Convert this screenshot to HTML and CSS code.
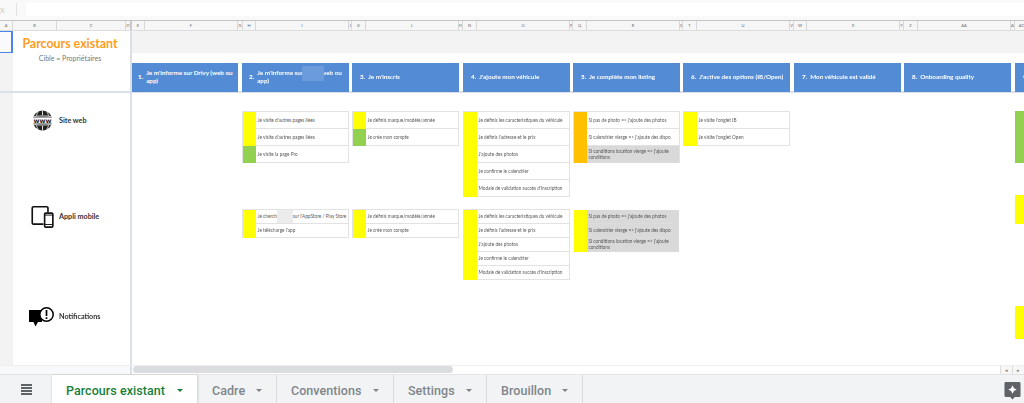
FILE: index.html
```html
<!DOCTYPE html>
<html lang="fr">
<head>
<meta charset="utf-8">
<title>Parcours existant</title>
<link rel="stylesheet" href="styles.css">
</head>
<body>
<div class="app">
  <div class="formula">
    <span class="fx">x</span>
    <div class="formula-input"></div>
  </div>
  <div class="colheads">
    <span class="ch w12">A</span><span class="ch w44">B</span><span class="ch w69">C</span><span class="ch w6 sep">D</span>
    <span class="ch w13">E</span><span class="ch w93">F</span><span class="ch w5">G</span>
    <span class="ch w13">H</span><span class="ch w93">I</span><span class="ch w3">J</span>
    <span class="ch w14">K</span><span class="ch w93">L</span><span class="ch w4">M</span>
    <span class="ch w14">N</span><span class="ch w93">O</span><span class="ch w3">P</span>
    <span class="ch w14">Q</span><span class="ch w93">R</span><span class="ch w3">S</span>
    <span class="ch w14">T</span><span class="ch w93">U</span><span class="ch w4">V</span>
    <span class="ch w13">W</span><span class="ch w93">X</span><span class="ch w4">Y</span>
    <span class="ch w14">Z</span><span class="ch w93">AA</span><span class="ch w4">AB</span>
    <span class="ch w14">AC</span>
  </div>

  <div class="sheet">
    <div class="top">
      <div class="rownum"><div class="selected"></div></div>
      <div class="frozen title-block">
        <h1 class="title">Parcours existant</h1>
        <p class="subtitle">Cible = Propriétaires</p>
      </div>
      <div class="main-top">
        <div class="band"></div>
        <div class="stages heads">
          <div class="head first"><b>1.</b><span>Je m'informe sur Drivy (web ou app)</span></div>
          <div class="head second"><b>2.</b><span>Je m'informe sur Drivy web ou app)</span><i class="smudge-blue"></i></div>
          <div class="head"><b>3.</b><span>Je m'inscris</span></div>
          <div class="head"><b>4.</b><span>J'ajoute mon véhicule</span></div>
          <div class="head"><b>5.</b><span>Je complète mon listing</span></div>
          <div class="head"><b>6.</b><span>J'active des options (IB/Open)</span></div>
          <div class="head"><b>7.</b><span>Mon véhicule est validé</span></div>
          <div class="head"><b>8.</b><span>Onboarding quality</span></div>
          <div class="head"><b>9.</b><span></span></div>
        </div>
      </div>
    </div>

    <div class="bottom">
      <div class="rownum"></div>
      <div class="frozen channels">
        <div class="channel web-ch">
          <svg class="ico" viewBox="0 0 24 24" width="23" height="23" aria-hidden="true">
            <circle cx="12" cy="12" r="10.4" fill="#222"/>
            <path d="M1.6 8.2C6 7 18 7 22.4 8.2M1.6 15.8C6 17 18 17 22.4 15.8M12 1.6V6.6M12 17.4V22.4M8 2.6C6.6 4 6 5.5 5.8 7M16 2.6C17.4 4 18 5.5 18.2 7M5.8 17C6 18.5 6.6 20 8 21.4M18.2 17C18 18.5 17.4 20 16 21.4" fill="none" stroke="#fff" stroke-width=".9"/>
            <rect x="0" y="8.8" width="24" height="6.4" fill="#fff"/>
            <text x="12" y="14.3" text-anchor="middle" class="www">www</text>
          </svg>
          <span>Site web</span>
        </div>
        <div class="channel app-ch">
          <svg class="ico" viewBox="0 0 24 24" width="23" height="24" aria-hidden="true">
            <path d="M13 19.5H2.6A1.3 1.3 0 0 1 1.3 18.2V2.6A1.3 1.3 0 0 1 2.6 1.3H16.4A1.3 1.3 0 0 1 17.7 2.6V7" fill="none" stroke="#111" stroke-width="1.7"/>
            <rect x="14.2" y="8" width="8.6" height="14.6" rx="1.2" fill="#fff" stroke="#111" stroke-width="1.7"/>
            <path d="M14.2 19.8H22.8M14.2 10H22.8" stroke="#111" stroke-width="1"/>
          </svg>
          <span>Appli mobile</span>
        </div>
        <div class="channel notif-ch">
          <svg class="ico wide" viewBox="0 0 26 22" width="26" height="22" aria-hidden="true">
            <path d="M1 4H14V16H10L7.5 20.5L5.5 16H1Z" fill="#000"/>
            <circle cx="18.5" cy="8.5" r="6.7" fill="#fff" stroke="#000" stroke-width="1.5"/>
            <path d="M18.5 4V10M18.5 11.3V13" stroke="#000" stroke-width="1.7"/>
          </svg>
          <span>Notifications</span>
        </div>
      </div>
      <div class="main-body">
        <div class="stages section web">
          <div></div>
          <div class="group">
            <div class="row"><i class="sw y"></i><p>Je visite d'autres pages liées</p></div>
            <div class="row"><i class="sw y"></i><p>Je visite d'autres pages liées</p></div>
            <div class="row"><i class="sw g"></i><p>Je visite la page Pro</p></div>
          </div>
          <div class="group">
            <div class="row"><i class="sw y"></i><p>Je définis marque/modèle/année</p></div>
            <div class="row"><i class="sw g"></i><p>Je crée mon compte</p></div>
          </div>
          <div class="group">
            <div class="row"><i class="sw y"></i><p>Je définis les caracteristiques du véhicule</p></div>
            <div class="row"><i class="sw y"></i><p>Je définis l'adresse et le prix</p></div>
            <div class="row"><i class="sw y"></i><p>J'ajoute des photos</p></div>
            <div class="row"><i class="sw y"></i><p>Je confirme le calendrier</p></div>
            <div class="row"><i class="sw y"></i><p>Modale de validation succès d'inscription</p></div>
          </div>
          <div class="group">
            <div class="row"><i class="sw o"></i><p>Si pas de photo =&gt; j'ajoute des photos</p></div>
            <div class="row"><i class="sw o"></i><p>Si calendrier vierge =&gt; j'ajoute des dispo</p></div>
            <div class="row off"><i class="sw o"></i><p>Si conditions location vierge =&gt; j'ajoute conditions</p></div>
          </div>
          <div class="group">
            <div class="row"><i class="sw y"></i><p>Je visite l'onglet IB</p></div>
            <div class="row"><i class="sw y"></i><p>Je visite l'onglet Open</p></div>
          </div>
          <div></div>
          <div></div>
          <div class="edge">
            <div class="row blank"><i class="sw g"></i></div>
            <div class="row blank"><i class="sw g"></i></div>
            <div class="row blank"><i class="sw g"></i></div>
            <div class="row blank late"><i class="sw y"></i></div>
          </div>
        </div>

        <div class="stages section appli">
          <div></div>
          <div class="group">
            <div class="row"><i class="sw y"></i><p>Je cherche Drivy sur l'AppStore / Play Store</p><i class="smudge-grey"></i></div>
            <div class="row"><i class="sw y"></i><p>Je télécharge l'app</p></div>
          </div>
          <div class="group">
            <div class="row"><i class="sw y"></i><p>Je définis marque/modèle/année</p></div>
            <div class="row"><i class="sw y"></i><p>Je crée mon compte</p></div>
          </div>
          <div class="group">
            <div class="row"><i class="sw y"></i><p>Je définis les caracteristiques du véhicule</p></div>
            <div class="row"><i class="sw y"></i><p>Je définis l'adresse et le prix</p></div>
            <div class="row"><i class="sw y"></i><p>J'ajoute des photos</p></div>
            <div class="row"><i class="sw y"></i><p>Je confirme le calendrier</p></div>
            <div class="row"><i class="sw y"></i><p>Modale de validation succès d'inscription</p></div>
          </div>
          <div class="group plain">
            <div class="row off"><i class="sw y"></i><p>Si pas de photo =&gt; j'ajoute des photos</p></div>
            <div class="row off"><i class="sw y"></i><p>Si calendrier vierge =&gt; j'ajoute des dispo</p></div>
            <div class="row off"><i class="sw y"></i><p>Si conditions location vierge =&gt; j'ajoute conditions</p></div>
          </div>
          <div></div>
          <div></div>
          <div></div>
          <div class="edge">
            <div class="row blank"><i class="sw y"></i></div>
          </div>
        </div>

        <div class="stages section notif">
          <div></div><div></div><div></div><div></div><div></div><div></div><div></div><div></div>
          <div class="edge">
            <div class="row blank tall"><i class="sw y"></i></div>
            <div class="row blank"><i class="sw y"></i></div>
          </div>
        </div>
      </div>
    </div>
  </div>

  <div class="hscroll">
    <div class="hscroll-left"></div>
    <div class="hscroll-track"><div class="thumb"></div></div>
    <div class="arrows"><span class="arrow">◂</span><span class="arrow">▸</span></div>
  </div>

  <div class="tabs">
    <div class="menu"><i></i><i></i><i></i><i></i></div>
    <div class="tab active t1">Parcours existant<em></em></div>
    <div class="tab t2">Cadre<em></em></div>
    <div class="tab t3">Conventions<em></em></div>
    <div class="tab t4">Settings<em></em></div>
    <div class="tab t5">Brouillon<em></em></div>
    <div class="explore">
      <svg viewBox="0 0 18 20" width="17" height="19" aria-hidden="true">
        <path d="M2 1H16A1.5 1.5 0 0 1 17.5 2.5V15.5A1.5 1.5 0 0 1 16 17H11.5L9 19.5L6.5 17H2A1.5 1.5 0 0 1 .5 15.5V2.5A1.5 1.5 0 0 1 2 1Z" fill="#5f6368"/>
        <path d="M9 4.5L10.5 7.5L13.5 9L10.5 10.5L9 13.5L7.5 10.5L4.5 9L7.5 7.5Z" fill="#fff"/>
      </svg>
    </div>
  </div>
</div>
</body>
</html>
```

FILE: styles.css
```css
* { box-sizing: border-box; }
html, body { margin: 0; height: 100%; overflow: hidden; background: #fff; }
body { font-family: "Lato", "Open Sans", sans-serif; color: #444; }

.app {
  width: 1024px;
  height: 403px;
  display: flex;
  flex-direction: column;
  overflow: hidden;
  filter: blur(.45px);
}

/* formula bar */
.formula {
  height: 20px;
  flex: none;
  background: #f9f9f9;
  display: flex;
  align-items: center;
  padding: 3px 0 4px 0;
}
.fx { width: 17px; font-size: 9px; color: #ccc; border-right: 1px solid #e2e2e2; height: 13px; line-height: 13px; flex: none; }
.formula-input { margin-left: 9px; flex: 1; height: 13px; background: #fff; }

/* column heads */
.colheads {
  height: 11px;
  flex: none;
  display: flex;
  background: #f6f6f6;
  border-top: 1px solid #c4c4c4;
  border-bottom: 1px solid #dcdcdc;
  overflow: hidden;
}
.ch {
  flex: none;
  font-size: 4px;
  line-height: 9px;
  text-align: center;
  color: #666;
  border-right: 1px solid #d8d8d8;
  overflow: hidden;
}
.sep { border-right: 2px solid #c9c9c9; }
.w3 { width: 3px; } .w4 { width: 4px; } .w5 { width: 5px; } .w6 { width: 6px; } .w12 { width: 13px; }
.w13 { width: 13px; } .w14 { width: 14px; } .w44 { width: 44px; } .w69 { width: 69px; }
.w93 { width: 93px; }

/* sheet */
.sheet { height: 334px; flex: none; display: flex; flex-direction: column; overflow: hidden; }
.top { height: 62px; flex: none; display: flex; border-bottom: 2px solid #dbe0e8; }
.bottom { flex: 1; display: flex; min-height: 0; }
.rownum { width: 13px; flex: none; background: #f3f3f3; }
.selected { height: 22px; border: 1px solid #4a86e8; border-left: 0; border-right-width: 2px; background: #fafafa; }
.frozen { width: 119px; flex: none; border-right: 2px solid #dbe0e8; background: #fff; }
.title-block { text-align: center; padding: 5px 3px 0 0; }
.title { margin: 0; font-size: 12.4px; line-height: 15px; font-weight: 700; color: #ff9c1f; }
.subtitle { margin: 2px 0 0; font-size: 7px; line-height: 10px; color: #777; }

.main-top { flex: 1; min-width: 0; }
.band { height: 22px; background: #f3f3f3; }
.stages {
  display: grid;
  grid-template-columns: 110px 110px 111px 110px 110px 111px 110px 111px 100px;
}
.heads { margin-top: 10px; }
.head {
  position: relative;
  width: 107px;
  height: 28.5px;
  background: #538bd5;
  color: #fff;
  display: flex;
  align-items: center;
  font-size: 6.3px;
  line-height: 8px;
  font-weight: 700;
  padding: 0 3px 0 8px;
  gap: 3px;
}
.head.first { width: 106px; padding-left: 6px; }
.head.second { padding-left: 7px; }
.head b { flex: none; }
.smudge-blue { position: absolute; left: 60px; top: 3px; width: 22px; height: 15px; background: #6c9bdb; }

.channels { display: flex; flex-direction: column; }
.channel { display: flex; align-items: center; gap: 5px; padding-left: 18px; font-size: 7.2px; font-weight: 700; color: #333; }
.web-ch { height: 47px; padding-top: 8px; }
.app-ch { height: 89px; align-items: flex-end; }
.app-ch span { margin-bottom: 8px; }
.notif-ch { height: 99px; align-items: flex-end; padding-left: 15px; }
.notif-ch span { margin-bottom: 7px; }

.main-body { flex: 1; min-width: 0; overflow: hidden; }
.section { align-items: start; }
.web { height: 115.5px; padding-top: 18px; --h: 17px; }
.appli { height: 97px; --h: 14px; }
.notif { --h: 14px; }

.group { width: 107px; border-top: 1px solid #e2e2e2; border-left: 1px solid #e2e2e2; border-right: 1px solid #e2e2e2; }
.group.plain { border-color: transparent; }
.row { position: relative; height: var(--h); display: flex; align-items: center; border-bottom: 1px solid #e2e2e2; background: #fff; }
.sw { align-self: stretch; width: 13px; flex: none; margin-bottom: -1px; }
.y { background: #ff0; }
.g { background: #92d050; }
.o { background: #ffc000; }
.row p { margin: 0; padding-left: 1.5px; font-size: 4.7px; line-height: 6px; color: #5a5a5a; white-space: nowrap; }
.row.off { background: #d9d9d9; border-bottom-color: #dcdcdc; }
.row.off p { white-space: normal; padding-right: 2px; color: #555; }
.smudge-grey { position: absolute; left: 34px; top: 0; width: 16px; height: 13px; background: #ececec; }

.edge { width: 100px; }
.edge .row { border-bottom-color: #eee; }
.row.blank { border-bottom: 0; }
.late { margin-top: 33px; }
.tall { height: 18.5px; }

/* horizontal scroller */
.hscroll { height: 10px; flex: none; display: flex; background: #fff; border-top: 1px solid #eee; border-bottom: 1px solid #e4e4e4; }
.hscroll-left { width: 132px; flex: none; background: #f8f9fa; border-right: 2px solid #dbe0e8; }
.hscroll-track { flex: 1; padding-left: 1px; }
.thumb { width: 320px; height: 7px; background: #dadce0; border-radius: 4px; }
.arrows { display: flex; flex: none; }
.arrow { width: 12px; font-size: 5px; line-height: 8px; text-align: center; color: #777; background: #f6f6f6; border-left: 1px solid #ddd; }

/* tabs */
.tabs { flex: 1; display: flex; background: #f1f3f4; font-family: "Roboto", sans-serif; font-size: 12.5px; font-weight: 500; letter-spacing: .05px; color: #80868b; }
.menu { width: 52px; flex: none; display: flex; flex-direction: column; justify-content: center; gap: 1px; padding: 0 20px 0 21px; }
.menu i { display: block; height: 2px; background: #5f6368; }
.tab { flex: none; display: flex; align-items: center; justify-content: space-between; padding: 3px 14px 0 14px; border-right: 1px solid #dadce0; white-space: nowrap; }
.tab em { width: 0; height: 0; border-left: 3.5px solid transparent; border-right: 3.5px solid transparent; border-top: 3.5px solid currentColor; }
.tab.active { background: #fff; color: #188038; box-shadow: 0 0 2px rgba(60,64,67,.25); }
.t1 { width: 146px; }
.t2 { width: 79px; }
.t3 { width: 117px; }
.t4 { width: 93px; }
.t5 { width: 96px; }
.explore { margin-left: auto; width: 20px; display: flex; align-items: center; padding-top: 3px; }
.www { font-family: "DejaVu Sans", sans-serif; font-size: 6.8px; font-weight: 700; fill: #222; }
.ico { flex: none; display: block; }
```
